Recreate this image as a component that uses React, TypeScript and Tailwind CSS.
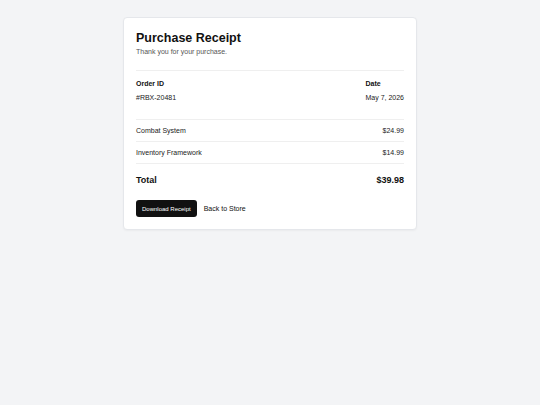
import React from "react";

export default function App() {
  return (
    <div
      className="min-h-screen bg-[#f3f4f6] pt-[17px]"
      style={{ fontFamily: '"Liberation Sans", Arial, sans-serif' }}
    >
      <div className="mx-auto w-[294px] rounded-[4px] border border-[#e5e7eb] bg-white p-[12px] shadow-[0_1px_2px_rgba(0,0,0,0.04)]">
        <h1 className="text-[12.5px] font-bold leading-[16px] text-[#111]">Purchase Receipt</h1>
        <p className="mt-[1px] text-[7px] leading-[10px] text-[#555]">Thank you for your purchase.</p>

        <div className="mt-[13px] flex justify-between border-t border-[#efefef] pb-[16px] pt-[7.5px]">
          <div>
            <div className="text-[7px] font-bold leading-[10px] text-[#111]">Order ID</div>
            <div className="mt-[4.5px] text-[7px] leading-[10px] text-[#222]">#RBX-20481</div>
          </div>
          <div>
            <div className="text-[7px] font-bold leading-[10px] text-[#111]">Date</div>
            <div className="mt-[4.5px] text-[7px] leading-[10px] text-[#222]">May 7, 2026</div>
          </div>
        </div>

        <div className="border-t border-[#efefef]">
          <div className="flex justify-between border-b border-[#efefef] py-[5.5px] text-[7px] leading-[10px] text-[#222]">
            <span>Combat System</span>
            <span>$24.99</span>
          </div>
          <div className="flex justify-between border-b border-[#efefef] py-[5.5px] text-[7px] leading-[10px] text-[#222]">
            <span>Inventory Framework</span>
            <span>$14.99</span>
          </div>
        </div>

        <div className="flex justify-between pt-[9px] text-[9px] font-bold leading-[14px] text-[#111]">
          <span>Total</span>
          <span>$39.98</span>
        </div>

        <div className="mt-[13px] flex items-center gap-[7px]">
          <button className="h-[17px] rounded-[3px] bg-[#111] px-[6px] text-[6px] leading-[8px] text-white">
            Download Receipt
          </button>
          <button className="text-[7px] leading-[10px] text-[#111]">Back to Store</button>
        </div>
      </div>
    </div>
  );
}
